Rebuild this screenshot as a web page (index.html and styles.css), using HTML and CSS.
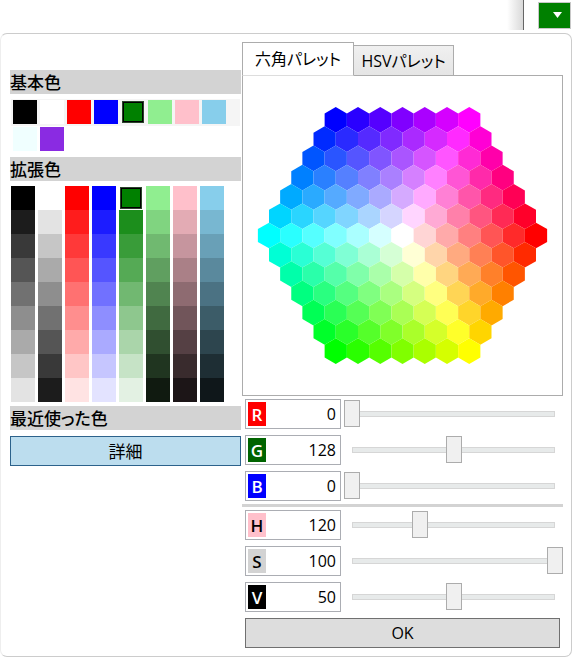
FILE: index.html
```html
<!DOCTYPE html>
<html lang="ja">
<head>
<meta charset="utf-8">
<title>カラーパレット</title>
<link rel="stylesheet" href="styles.css">
</head>
<body>
<header class="topbar">
  <div class="edge"></div>
  <button class="color-button" type="button" aria-label="色を選択">
    <svg class="arrow" viewBox="0 0 9 6" aria-hidden="true"><path d="M0 0H9L4.500 6Z" fill="#fff"/></svg>
  </button>
</header>
<main class="popup">
  <section class="swatches">
    <h2 class="heading">基本色</h2>
    <div class="basic" id="basic"></div>
    <h2 class="heading">拡張色</h2>
    <div class="extended" id="extended"></div>
    <h2 class="heading">最近使った色</h2>
    <button class="detail" type="button">詳細</button>
  </section>
  <section class="editor">
    <div class="tabs" role="tablist">
      <button class="tab tab-active" type="button" role="tab" aria-selected="true">六角パレット</button>
      <button class="tab" type="button" role="tab" aria-selected="false">HSVパレット</button>
    </div>
    <div class="panel" role="tabpanel">
      <svg class="hexes" id="hexes" viewBox="0 0 319 319" role="img" aria-label="六角パレット"></svg>
    </div>
    <div class="channels">
      <div class="channel">
        <div class="field"><label class="badge badge-r" for="r">R</label><input class="number" id="r" type="text" value="0"></div>
        <input class="slider" type="range" min="0" max="255" value="0" aria-label="R">
      </div>
      <div class="channel">
        <div class="field"><label class="badge badge-g" for="g">G</label><input class="number" id="g" type="text" value="128"></div>
        <input class="slider" type="range" min="0" max="255" value="128" aria-label="G">
      </div>
      <div class="channel">
        <div class="field"><label class="badge badge-b" for="b">B</label><input class="number" id="b" type="text" value="0"></div>
        <input class="slider" type="range" min="0" max="255" value="0" aria-label="B">
      </div>
    </div>
    <hr class="rule">
    <div class="channels">
      <div class="channel">
        <div class="field"><label class="badge badge-h" for="h">H</label><input class="number" id="h" type="text" value="120"></div>
        <input class="slider" type="range" min="0" max="360" value="120" aria-label="H">
      </div>
      <div class="channel">
        <div class="field"><label class="badge badge-s" for="s">S</label><input class="number" id="s" type="text" value="100"></div>
        <input class="slider" type="range" min="0" max="100" value="100" aria-label="S">
      </div>
      <div class="channel">
        <div class="field"><label class="badge badge-v" for="v">V</label><input class="number" id="v" type="text" value="50"></div>
        <input class="slider" type="range" min="0" max="100" value="50" aria-label="V">
      </div>
    </div>
    <button class="ok" type="button">OK</button>
  </section>
</main>
<script src="palette.js"></script>
</body>
</html>
```
FILE: styles.css
```css
* { box-sizing: border-box; }

body {
  margin: 0;
  min-height: 100vh;
  display: flex;
  flex-direction: column;
  background: #fff;
  color: #000;
  font: 16px/24px "Open Sans", "Noto Sans CJK JP", sans-serif;
  font-feature-settings: "palt";
}

button, input { font: inherit; font-feature-settings: inherit; color: inherit; margin: 0; padding: 0; }

.topbar {
  height: 30px;
  display: flex;
  justify-content: flex-end;
  align-items: center;
  gap: 14px;
  padding-right: 2px;
}

.edge {
  width: 17px;
  height: 100%;
  border-right: 1px solid #666;
  background: linear-gradient(to right, #fff, #d9d9d9);
}

.color-button {
  width: 33px;
  height: 27px;
  display: flex;
  align-items: center;
  justify-content: flex-end;
  padding-right: 8px;
  background: #008000;
  border: 1px solid #c8c8c8;
}

.arrow { width: 9px; height: 6px; }

.popup {
  flex: 1;
  display: grid;
  grid-template-columns: 231fr 321fr;
  column-gap: 1px;
  margin: 3px 1px 0 0;
  padding: 8px 8px 8px 9px;
  border: 1px solid #ccc;
  border-left-color: #eee;
  border-radius: 7px;
}

.swatches {
  display: flex;
  flex-direction: column;
  padding-top: 28px;
}

.heading {
  margin: 0 0 5px;
  height: 24px;
  font-size: 17px;
  line-height: 26px;
  font-weight: 500;
  background: #d3d3d3;
}

.basic {
  display: grid;
  grid-template-columns: repeat(auto-fill, 24px);
  gap: 3px;
  margin: 0 1px 5px;
  padding: 1px 2px;
  background: linear-gradient(#f5f5f5, #f5f5f5) top / 100% 27px no-repeat;
}

.extended {
  display: grid;
  grid-template-columns: repeat(8, 24px);
  column-gap: 3px;
  margin: 0 1px 4px;
}

.swatch { height: 24px; border: 0; }

.swatch-selected {
  height: 22px;
  margin: 1px;
  border: 1px solid #2c442c;
  box-shadow: inset 0 0 0 1px #000;
}

.detail {
  height: 30px;
  margin-top: 1px;
  padding-top: 1px;
  font-size: 17px;
  border: 1px solid #2c628b;
  background: #bcddee;
}

.editor { display: flex; flex-direction: column; }

.tabs { position: relative; display: flex; align-items: flex-end; height: 34px; }

.tab {
  height: 31px;
  width: 100px;
  white-space: nowrap;
  background: linear-gradient(#f0f0f0, #e5e5e5);
  border: 1px solid #acacac;
  border-left: 0;
}

.tab-active {
  width: 112px;
  height: 34px;
  background: #fff;
  border-left: 1px solid #acacac;
  border-bottom-color: #ddd;
}

.panel { margin-top: -1px; border: 1px solid #acacac; }

.hexes { display: block; width: 100%; }

.channels {
  display: flex;
  flex-direction: column;
  gap: 6px;
  padding: 3px 0 3px 3px;
}

.channel { display: flex; gap: 3px; height: 30px; }

.field {
  width: 96px;
  height: 30px;
  display: flex;
  align-items: center;
  padding: 0 4px 0 2px;
  border: 1px solid #abadb3;
  background: #fff;
}

.badge {
  width: 18px;
  height: 24px;
  line-height: 25px;
  font-size: 17px;
  text-align: center;
  font-weight: 600;
}

.badge-r { background: #f00; color: #fff; }
.badge-g { background: #006400; color: #fff; }
.badge-b { background: #00f; color: #fff; }
.badge-h { background: #ffc0cb; }
.badge-s { background: #d3d3d3; }
.badge-v { background: #000; color: #fff; }

.number {
  flex: 1;
  min-width: 0;
  border: 0;
  outline: 0;
  background: none;
  text-align: right;
}

.slider {
  appearance: none;
  -webkit-appearance: none;
  flex: 1;
  min-width: 0;
  height: 27px;
  margin-top: 1px;
  background:
    linear-gradient(#e7eaea, #e7eaea) center / calc(100% - 18px) 4px no-repeat,
    linear-gradient(#d6d6d6, #d6d6d6) center / calc(100% - 16px) 6px no-repeat;
}

.slider::-webkit-slider-runnable-track { height: 27px; background: none; }

.slider::-webkit-slider-thumb {
  -webkit-appearance: none;
  width: 16px;
  height: 27px;
  border: 1px solid #acacac;
  background: #f0f0f0;
}

.rule { width: 100%; height: 3px; margin: 0; border: 0; background: #d3d3d3; }

.ok {
  height: 30px;
  margin: 3px 3px 0;
  border: 1px solid #707070;
  background: #ddd;
}
```
FILE: palette.js
```js
const BASIC = [
  [0, 0, 0], [255, 255, 255], [255, 0, 0], [0, 0, 255], [0, 128, 0],
  [144, 238, 144], [255, 192, 203], [135, 206, 235], [240, 255, 255], [138, 43, 226],
];
// Value that each of the first eight columns fades towards.
const FADE = [255, 0, 255, 255, 255, 0, 0, 0];
const SELECTED = 4;
const rgb = (c) => `rgb(${c.map(Math.round).join(',')})`;

function addSwatch(parent, color, selected) {
  const button = document.createElement('button');
  button.type = 'button';
  button.className = selected ? 'swatch swatch-selected' : 'swatch';
  button.style.backgroundColor = rgb(color);
  button.setAttribute('aria-label', rgb(color));
  parent.append(button);
}

const basic = document.getElementById('basic');
BASIC.forEach((color, i) => addSwatch(basic, color, i === SELECTED));

const extended = document.getElementById('extended');
for (let row = 0; row < 9; row++) {
  FADE.forEach((target, col) => {
    const color = BASIC[col].map((v) => v + (target - v) * row / 9);
    addSwatch(extended, color, row === 0 && col === SELECTED);
  });
}

// Hexagon of hexagons: white in the middle, pure hues at the six corners.
const RINGS = 6;
const PITCH = 22.25;
const RADIUS = PITCH / Math.sqrt(3);
const hexes = document.getElementById('hexes');
for (let r = -RINGS; r <= RINGS; r++) {
  const count = 2 * RINGS + 1 - Math.abs(r);
  for (let i = 0; i < count; i++) {
    const x = i - (count - 1) / 2;
    const q = x - r / 2;
    const s = -q - r;
    const color = [Math.max(0, -q, s), Math.max(0, q, -r), Math.max(0, r, -s)]
      .map((v) => 255 * (1 - v / RINGS));
    const cx = 159.5 + x * PITCH;
    const cy = 159.5 + r * RADIUS * 1.5;
    const points = [0, 1, 2, 3, 4, 5].map((k) => {
      const angle = Math.PI / 6 + k * Math.PI / 3;
      return `${cx + RADIUS * Math.cos(angle)},${cy + RADIUS * Math.sin(angle)}`;
    });
    const hex = document.createElementNS('http://www.w3.org/2000/svg', 'polygon');
    hex.setAttribute('points', points.join(' '));
    hex.setAttribute('fill', rgb(color));
    hexes.append(hex);
  }
}
```
